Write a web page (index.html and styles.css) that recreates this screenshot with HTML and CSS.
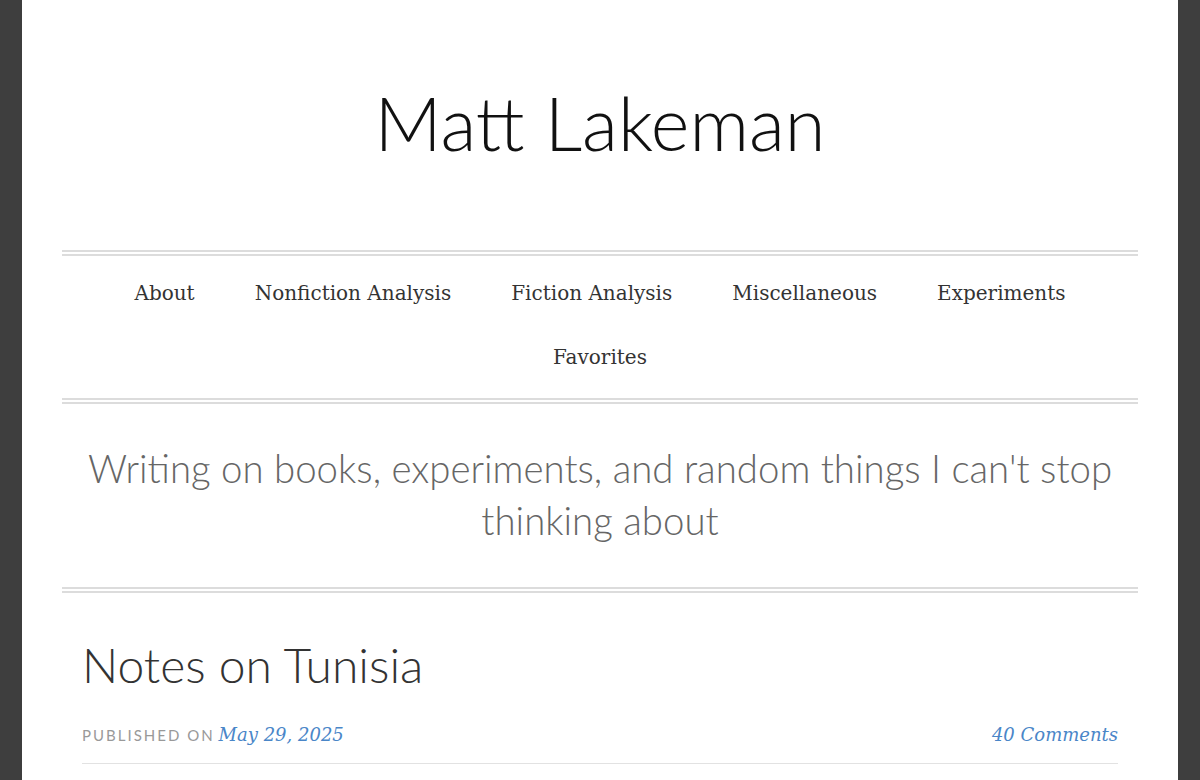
FILE: index.html
```html
<!DOCTYPE html>
<html lang="en">
<head>
<meta charset="utf-8">
<title>Matt Lakeman</title>
<link rel="stylesheet" href="styles.css">
</head>
<body>
<div class="page">
  <header class="site-header">
    <h1 class="site-title">Matt Lakeman</h1>
  </header>
  <nav class="main-nav">
    <ul class="menu">
      <li><a href="#">About</a></li>
      <li><a href="#">Nonfiction Analysis</a></li>
      <li><a href="#">Fiction Analysis</a></li>
      <li><a href="#">Miscellaneous</a></li>
      <li><a href="#">Experiments</a></li>
      <li><a href="#">Favorites</a></li>
    </ul>
  </nav>
  <div class="tagline">Writing on books, experiments, and random things I can't stop thinking about</div>
  <article class="post">
    <h2 class="post-title">Notes on Tunisia</h2>
    <div class="post-meta">
      <span class="published"><span class="label">Published on</span> <a href="#" class="date">May 29, 2025</a></span>
      <a href="#" class="comments">40 Comments</a>
    </div>
  </article>
</div>
</body>
</html>
```

FILE: styles.css
```css
html, body {
  margin: 0;
  padding: 0;
  height: 100%;
}
body {
  background: #3e3e3e;
  overflow: hidden;
}
.page {
  margin: 0 22px;
  background: #fff;
  min-height: 100%;
  padding: 0 40px;
  box-sizing: border-box;
}
.site-header {
  height: 250px;
  box-sizing: border-box;
  padding-top: 78px;
  text-align: center;
}
.site-title {
  margin: 0;
  font-family: Lato, sans-serif;
  font-weight: 300;
  font-size: 74px;
  line-height: 90px;
  color: #111;
}
.main-nav {
  border-top: 6px double #dcdcdc;
  border-bottom: 6px double #dcdcdc;
  padding: 5px 0 9px;
}
.menu {
  list-style: none;
  margin: 0;
  padding: 0;
  display: flex;
  flex-wrap: wrap;
  justify-content: center;
}
.menu li {
  padding: 0 30px;
  height: 64px;
  line-height: 64px;
}
.menu a {
  font-family: "DejaVu Serif", serif;
  font-size: 20px;
  color: #333;
  text-decoration: none;
}
.tagline {
  text-align: center;
  font-family: Lato, sans-serif;
  font-weight: 300;
  font-size: 38.4px;
  line-height: 52px;
  color: #666;
  padding: 38px 0 41px;
  border-bottom: 6px double #dcdcdc;
}
.post {
  padding: 0 20px;
}
.post-title {
  margin: 0;
  padding-top: 42px;
  font-family: Lato, sans-serif;
  font-weight: 300;
  font-size: 48px;
  line-height: 60px;
  color: #333;
}
.post-meta {
  display: flex;
  justify-content: space-between;
  align-items: baseline;
  padding: 29px 0 18px;
  border-bottom: 1px solid #e2e2e2;
}
.label {
  font-family: Lato, sans-serif;
  text-transform: uppercase;
  letter-spacing: 2px;
  font-size: 15px;
  color: #999;
}
.date, .comments {
  font-family: "DejaVu Serif", serif;
  font-style: italic;
  font-size: 18px;
  color: #4a86c8;
  text-decoration: none;
}
```
